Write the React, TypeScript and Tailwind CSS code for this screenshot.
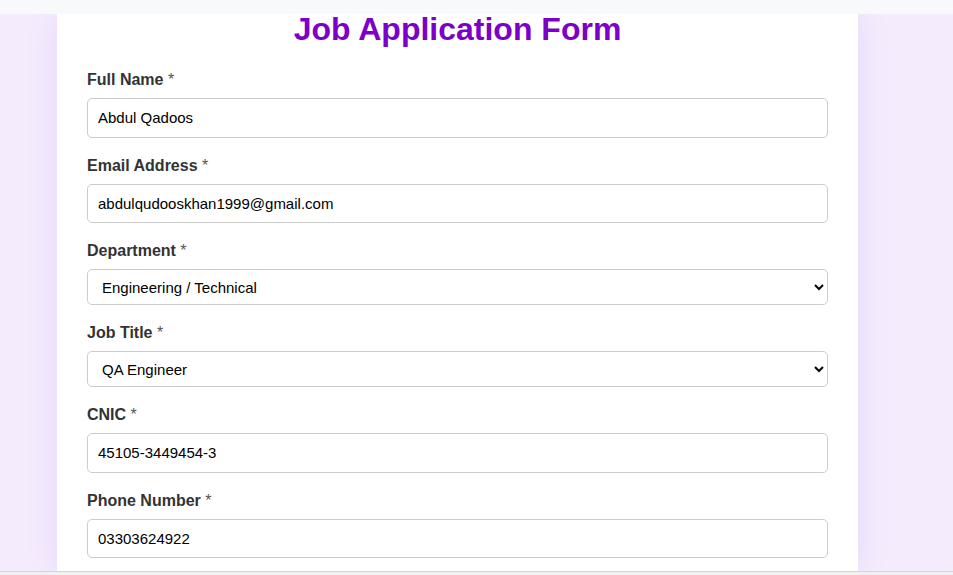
import { useState } from "react";

const font = { fontFamily: '"Liberation Sans", Arial, sans-serif' };

function Label({ text }: { text: string }) {
  return (
    <label className="block h-[20px] mb-[8px] text-[16px] leading-[20px] font-bold text-[#333]">
      {text} <span className="font-normal text-[#555]">*</span>
    </label>
  );
}

function TextField({ label, value }: { label: string; value: string }) {
  const [v, setV] = useState(value);
  return (
    <div className="mb-[18px]">
      <Label text={label} />
      <input
        value={v}
        onChange={(e) => setV(e.target.value)}
        className="block w-full h-[39.5px] px-[10px] text-[15px] text-black bg-white border border-[#ccc] rounded-[5px] outline-none"
      />
    </div>
  );
}

function SelectField({ label, value, options }: { label: string; value: string; options: string[] }) {
  const [v, setV] = useState(value);
  return (
    <div className="mb-[18px]">
      <Label text={label} />
      <select
        value={v}
        onChange={(e) => setV(e.target.value)}
        className="block w-full h-[36px] px-[10px] text-[15px] text-black bg-white border border-[#ccc] rounded-[5px] outline-none"
      >
        {options.map((o) => (
          <option key={o}>{o}</option>
        ))}
      </select>
    </div>
  );
}

export default function App() {
  return (
    <div className="h-[575px] w-full flex flex-col overflow-hidden bg-[#f4ecfd]" style={font}>
      <div className="h-[14px] shrink-0 bg-[#f8f9fa]" />

      <div className="flex-1 overflow-hidden pl-[57px]">
        <div className="w-[801px] min-h-full bg-white px-[30px] shadow-[0_0_30px_rgba(140,60,230,0.12)]">
          <h1 className="text-center text-[32px] leading-[30px] font-bold text-[#7c00c7] mb-[26px]">
            Job Application Form
          </h1>

          <TextField label="Full Name" value="Abdul Qadoos" />
          <TextField label="Email Address" value="abdulqudooskhan1999@gmail.com" />
          <SelectField
            label="Department"
            value="Engineering / Technical"
            options={["Engineering / Technical", "Human Resources", "Finance", "Marketing"]}
          />
          <SelectField
            label="Job Title"
            value="QA Engineer"
            options={["QA Engineer", "Software Engineer", "DevOps Engineer"]}
          />
          <TextField label="CNIC" value="45105-3449454-3" />
          <TextField label="Phone Number" value="03303624922" />
        </div>
      </div>

      <div className="h-[4px] shrink-0 bg-[#f1f1f1] border-t border-[#d4d4d4]" />
    </div>
  );
}
